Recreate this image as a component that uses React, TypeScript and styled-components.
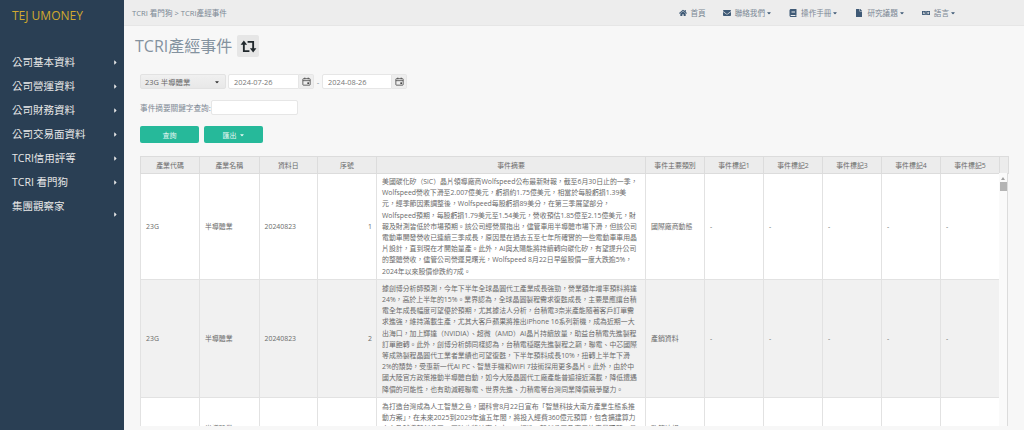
import React from "react";
import styled, { createGlobalStyle } from "styled-components";
import {
  FaBook,
  FaCaretDown,
  FaCaretRight,
  FaEnvelope,
  FaFile,
  FaHome,
  FaLanguage,
} from "react-icons/fa";

const FONT = `"Open Sans", "Noto Sans CJK TC", sans-serif`;

const GlobalStyle = createGlobalStyle`
  html, body {
    margin: 0;
    height: 100%;
    overflow: hidden;
    background: #f7f7f7;
    font-family: ${FONT};
  }
  * { box-sizing: border-box; }
`;

const Page = styled.div`
  display: flex;
  width: 1024px;
  height: 430px;
  overflow: hidden;
`;

const Sidebar = styled.aside`
  width: 124px;
  flex: none;
  background: #2a3f54;
  color: #e7e7e7;
`;

const Logo = styled.div`
  height: 50px;
  padding: 9px 0 0 12px;
  color: #d1a92f;
  font-size: 12px;
  line-height: 14px;
`;

const MenuList = styled.ul`
  list-style: none;
  margin: 0;
  padding: 0;
`;

const MenuItem = styled.li<{ $tall?: boolean }>`
  display: flex;
  justify-content: space-between;
  align-items: ${({ $tall }) => ($tall ? "flex-start" : "center")};
  height: 24px;
  padding: ${({ $tall }) => ($tall ? "5px" : "0")} 5px 0 12px;
  font-size: 10.5px;
  line-height: 14px;
  svg {
    width: 7px;
    height: 7px;
    color: #e7e7e7;
    margin-top: ${({ $tall }) => ($tall ? "12px" : "0")};
  }
`;

const Main = styled.main`
  flex: 1;
  min-width: 0;
  display: flex;
  flex-direction: column;
`;

const TopBar = styled.header`
  height: 26px;
  flex: none;
  display: flex;
  align-items: center;
  justify-content: space-between;
  padding: 0 68px 0 8px;
  background: #ededed;
  border-bottom: 1px solid #e6e6e6;
  color: #7a8794;
  font-size: 7.6px;
`;

const TopNav = styled.nav`
  display: flex;
  align-items: center;
  gap: 17px;
`;

const NavLink = styled.span`
  display: flex;
  align-items: center;
  gap: 4px;
  color: #7a8794;
  svg { width: 8px; height: 8px; color: #3f5a76; }
  svg.caret { width: 6px; height: 6px; margin-left: -3px; }
`;

const Content = styled.div`
  flex: 1;
  min-height: 0;
  padding: 6px 16px 0;
`;

const TitleRow = styled.div`
  display: flex;
  align-items: center;
  gap: 5px;
  height: 28px;
  margin: 0 0 14px -5px;
`;

const Title = styled.h1`
  margin: 0;
  font-size: 16px;
  font-weight: 400;
  color: #84929f;
  line-height: 24px;
`;

const IconButton = styled.span`
  width: 22px;
  height: 22px;
  display: flex;
  align-items: center;
  justify-content: center;
  background: #e6e6e6;
  border-radius: 2px;
  svg { width: 17px; height: 13px; }
`;

const FilterRow = styled.div`
  display: flex;
  align-items: center;
  height: 15px;
  color: #7d8894;
  font-size: 7.65px;
`;

const SelectBox = styled.div`
  width: 86px;
  height: 15px;
  display: flex;
  align-items: center;
  justify-content: space-between;
  padding: 0 5px 0 4px;
  margin-right: 2px;
  background: linear-gradient(#f0f0f0, #e8e8e8);
  border: 1px solid #e2e2e2;
  border-radius: 2px;
  color: #666;
  font-size: 7.4px;
  svg { width: 6px; height: 6px; color: #333; }
`;

const TextInput = styled.input<{ $width: number }>`
  width: ${({ $width }) => $width}px;
  height: 15px;
  padding: 0 5px;
  background: #fff;
  border: 1px solid #e6e6e6;
  border-radius: 2px 0 0 2px;
  color: #777;
  font-family: ${FONT};
  font-size: 7.4px;
  outline: none;
`;

const KeywordInput = styled(TextInput)`
  border-radius: 2px;
`;

const AddOn = styled.span`
  width: 15px;
  height: 15px;
  display: flex;
  align-items: center;
  justify-content: center;
  background: #eee;
  border: 1px solid #e6e6e6;
  border-left: none;
  border-radius: 0 2px 2px 0;
  svg { width: 9px; height: 9px; }
`;

const Dash = styled.span`
  width: 8px;
  text-align: center;
`;

const KeywordRow = styled(FilterRow)`
  margin-top: 11px;
`;

const ButtonRow = styled.div`
  display: flex;
  gap: 5px;
  margin-top: 11px;
`;

const GreenButton = styled.span`
  width: 59px;
  height: 17px;
  display: flex;
  align-items: center;
  justify-content: center;
  gap: 2px;
  background: #26b99a;
  border-radius: 2px;
  color: #e8f7f3;
  font-size: 7px;
  svg { width: 6px; height: 6px; }
`;

const TableWrap = styled.div`
  position: relative;
  width: 868px;
  margin-top: 13px;
`;

const Grid = styled.table<{ $width: number }>`
  width: ${({ $width }) => $width}px;
  table-layout: fixed;
  border-collapse: collapse;
  font-size: 6.9px;
  color: #6a6a6a;
`;

const HeadCell = styled.th`
  height: 16.5px;
  padding: 0 4px;
  background: #ececec;
  border: 1px solid #dcdcdc;
  font-weight: 400;
  text-align: center;
`;

const ScrollBody = styled.div`
  height: 252.5px;
  overflow: hidden;
  background: #fff;
  border-right: 1px solid #dcdcdc;
`;

const Row = styled.tr<{ $striped?: boolean }>`
  background: ${({ $striped }) => ($striped ? "#f1f1f1" : "#fff")};
`;

const Cell = styled.td<{ $right?: boolean }>`
  padding: 2.5px ${({ $right }) => ($right ? 4 : 7)}px 2.5px 5px;
  border: 1px solid #e2e2e2;
  border-top: none;
  line-height: 11.2px;
  vertical-align: middle;
  text-align: ${({ $right }) => ($right ? "right" : "left")};
  overflow-wrap: anywhere;
`;

const ScrollTrack = styled.div`
  position: absolute;
  right: 1px;
  top: 17px;
  bottom: 0;
  width: 8px;
  background: #fafafa;
  display: flex;
  flex-direction: column;
  align-items: center;
  padding-top: 4px;
`;

const ScrollArrow = styled.span`
  width: 0;
  height: 0;
  border-left: 2px solid transparent;
  border-right: 2px solid transparent;
  border-bottom: 3px solid #a0a0a0;
`;

const ScrollThumb = styled.span`
  width: 7px;
  height: 9px;
  margin-top: 2px;
  background: #b4b4b4;
`;

const Calendar = () => (
  <svg viewBox="0 0 16 16" fill="none" stroke="#444" strokeWidth="1.4">
    <rect x="1.5" y="3" width="13" height="11.5" rx="1" />
    <path d="M1.5 6.5h13M5 1v3M11 1v3" />
    <rect x="9.5" y="9.5" width="3" height="3" fill="#444" stroke="none" />
  </svg>
);

const Retweet = () => (
  <svg viewBox="0 0 18 14">
    <path d="M4 4v8h6M14 10V2H8" fill="none" stroke="#20282c" strokeWidth="2" />
    <path d="M.5 5 4 .5 7.500 5zM10.500 9 14 13.500 17.500 9z" fill="#20282c" />
  </svg>
);

const MENU = [
  "公司基本資料",
  "公司營運資料",
  "公司財務資料",
  "公司交易面資料",
  "TCRI信用評等",
  "TCRI 看門狗",
  "集團觀察家",
];

const HEADERS = [
  "產業代碼",
  "產業名稱",
  "資料日",
  "序號",
  "事件摘要",
  "事件主要類別",
  "事件標記1",
  "事件標記2",
  "事件標記3",
  "事件標記4",
  "事件標記5",
  "",
];

const WIDTHS = [59, 59.5, 58.5, 59, 269, 59, 59, 59, 59, 59, 59, 9];

const ROWS = [
  {
    no: 1,
    kind: "國際廠商動態",
    summary:
      "美國碳化矽（SiC）晶片領導廠商Wolfspeed公布最新財報，截至6月30日止的一季，Wolfspeed營收下滑至2.007億美元，虧損約1.75億美元，相當於每股虧損1.39美元，經季節因素調整後，Wolfspeed每股虧損89美分，在第三季展望部分，Wolfspeed預期，每股虧損1.79美元至1.54美元，營收預估1.85億至2.15億美元，財報及財測皆低於市場預期。該公司經營層指出，儘管車用半導體市場下滑，但該公司電動車開發營收已連續三季成長，原因是在過去五至七年所確實的一些電動車車用晶片設計，直到現在才開始量產。此外，AI與太陽能將持續轉向碳化矽，有望提升公司的整體營收，儘管公司營運見曙光，Wolfspeed 8月22日早盤股價一度大跌逾5%，2024年以來股價慘跌約7成。",
  },
  {
    no: 2,
    kind: "產銷資料",
    summary:
      "據創博分析師預測，今年下半年全球晶圓代工產業成長強勁，營業額年增率預料將達24%，高於上半年的15%。業界認為，全球晶圓製程需求復甦成長，主要是應讓台積電全年成長幅度可望優於預期，尤其據法人分析，台積電3奈米產能隨著客戶訂單需求進強，維持滿載生產，尤其大客戶蘋果將推出iPhone 16系列新機，成為近期一大出海口，加上輝達（NVIDIA）、超微（AMD）AI晶片持續放量，助益台積電先進製程訂單飽轉。此外，創博分析師同樣認為，台積電穩踞先進製程之巔，聯電、中芯國際等成熟製程晶圓代工業者業績也可望復甦，下半年預料成長10%，扭轉上半年下滑2%的頹勢，受惠新一代AI PC、智慧手機和WiFi 7技術採用更多晶片。此外，由於中國大陸官方政策推動半導體自動，如今大陸晶圓代工廠產能普遍接近滿載，降低遭遇降價的可能性，也有助減輕聯電、世界先進、力積電等台灣同業降價競爭壓力。",
  },
  {
    no: 3,
    kind: "政策法規",
    summary:
      "為打造台灣成為人工智慧之島，國科會8月22日宣布「智慧科技大南方產業生態系推動方案」，在未來2025到2029年這五年間，將投入經費360億元預算，包含擴建算力中心及輔導新創公司，同時也將培育人才，以打造AI新創公司及應用的產業聚落，帶動南部半導體供應鏈與智慧科技的整合發展，並協助產業導入人工智慧應用，提升整體競爭力。",
  },
];

const Cols = ({ widths }: { widths: number[] }) => (
  <colgroup>
    {widths.map((w, i) => (
      <col key={i} width={w} />
    ))}
  </colgroup>
);

export default function App() {
  return (
    <Page>
      <GlobalStyle />
      <Sidebar>
        <Logo>TEJ UMONEY</Logo>
        <MenuList>
          {MENU.map((label, i) => (
            <MenuItem key={label} $tall={i === MENU.length - 1}>
              {label}
              <FaCaretRight />
            </MenuItem>
          ))}
        </MenuList>
      </Sidebar>
      <Main>
        <TopBar>
          <span>TCRI 看門狗 &gt; TCRI產經事件</span>
          <TopNav>
            <NavLink>
              <FaHome />
              首頁
            </NavLink>
            <NavLink>
              <FaEnvelope />
              聯絡我們
              <FaCaretDown className="caret" />
            </NavLink>
            <NavLink>
              <FaBook />
              操作手冊
              <FaCaretDown className="caret" />
            </NavLink>
            <NavLink>
              <FaFile />
              研究議題
              <FaCaretDown className="caret" />
            </NavLink>
            <NavLink>
              <FaLanguage />
              語言
              <FaCaretDown className="caret" />
            </NavLink>
          </TopNav>
        </TopBar>
        <Content>
          <TitleRow>
            <Title>TCRI產經事件</Title>
            <IconButton>
              <Retweet />
            </IconButton>
          </TitleRow>
          <FilterRow>
            <SelectBox>
              23G 半導體業
              <FaCaretDown />
            </SelectBox>
            <TextInput $width={71} readOnly value="2024-07-26" />
            <AddOn>
              <Calendar />
            </AddOn>
            <Dash>-</Dash>
            <TextInput $width={70} readOnly value="2024-08-26" />
            <AddOn>
              <Calendar />
            </AddOn>
          </FilterRow>
          <KeywordRow>
            事件摘要關鍵字查詢:
            <KeywordInput $width={87} />
          </KeywordRow>
          <ButtonRow>
            <GreenButton>查詢</GreenButton>
            <GreenButton>
              匯出
              <FaCaretDown />
            </GreenButton>
          </ButtonRow>
          <TableWrap>
            <Grid $width={868}>
              <Cols widths={WIDTHS} />
              <thead>
                <tr>
                  {HEADERS.map((h, i) => (
                    <HeadCell key={i}>{h}</HeadCell>
                  ))}
                </tr>
              </thead>
            </Grid>
            <ScrollBody>
              <Grid $width={859}>
                <Cols widths={WIDTHS.slice(0, -1)} />
                <tbody>
                  {ROWS.map((r) => (
                    <Row key={r.no} $striped={r.no % 2 === 0}>
                      <Cell>23G</Cell>
                      <Cell>半導體業</Cell>
                      <Cell>20240823</Cell>
                      <Cell $right>{r.no}</Cell>
                      <Cell>{r.summary}</Cell>
                      <Cell>{r.kind}</Cell>
                      <Cell>-</Cell>
                      <Cell>-</Cell>
                      <Cell>-</Cell>
                      <Cell>-</Cell>
                      <Cell>-</Cell>
                    </Row>
                  ))}
                </tbody>
              </Grid>
            </ScrollBody>
            <ScrollTrack>
              <ScrollArrow />
              <ScrollThumb />
            </ScrollTrack>
          </TableWrap>
        </Content>
      </Main>
    </Page>
  );
}
